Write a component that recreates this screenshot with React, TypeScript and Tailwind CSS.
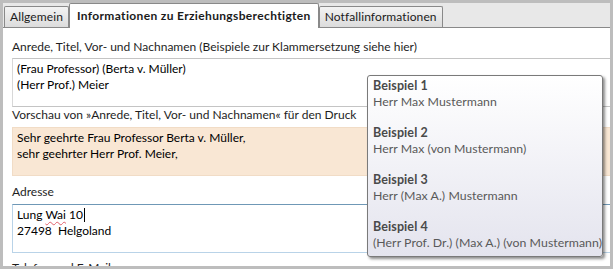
const font = "font-['Lato','Open_Sans',sans-serif]";

const examples = [
  { title: 'Beispiel 1', text: 'Herr Max Mustermann' },
  { title: 'Beispiel 2', text: 'Herr Max (von Mustermann)' },
  { title: 'Beispiel 3', text: 'Herr (Max A.) Mustermann' },
  { title: 'Beispiel 4', text: '(Herr Prof. Dr.) (Max A.) (von Mustermann)' },
];

function Tab({ label, active = false }: { label: string; active?: boolean }) {
  if (active) {
    return (
      <div className="relative z-10 -mb-px flex h-[25px] items-center rounded-t-[2px] border border-b-0 border-[#898989] bg-white px-[7px] font-bold tracking-[0.35px] text-[#1b1b1b]">
        {label}
      </div>
    );
  }
  return (
    <div className="flex h-[21px] items-center rounded-t-[2px] border border-b-0 border-[#898989] bg-gradient-to-b from-[#f3f3f3] to-[#dcdcdc] px-[5px] tracking-[0.1px] text-[#1b1b1b]">
      {label}
    </div>
  );
}

function ExampleTooltip() {
  return (
    <div className="absolute left-[364px] top-[72px] flex h-[182px] w-[236px] flex-col gap-[15px] whitespace-nowrap rounded-[3px] border border-[#7a7a7a] bg-gradient-to-b from-white to-[#e4e4ee] px-[5px] pt-[2px] shadow-[2px_2px_3px_rgba(0,0,0,0.45)]">
      {examples.map((ex) => (
        <div key={ex.title} className="leading-4">
          <div className="text-[12.5px] font-bold tracking-[0.1px] text-[#4a4a4a]">{ex.title}</div>
          <div className="text-[12.3px] tracking-[0.05px] text-[#595959]">{ex.text}</div>
        </div>
      ))}
    </div>
  );
}

export default function App() {
  return (
    <div className={`h-[269px] w-[613px] overflow-hidden bg-[#bdbdbd] p-[3px] text-[12px] leading-4 ${font}`}>
      <div className="relative flex h-full flex-col overflow-hidden bg-white">
        <div className="flex h-[25px] shrink-0 items-end border-b border-[#898989] bg-[#e8e8e8] pl-px">
          <Tab label="Allgemein" />
          <Tab label="Informationen zu Erziehungsberechtigten" active />
          <Tab label="Notfallinformationen" />
        </div>

        <div className="flex flex-col pl-[9px] pt-[11px] text-[#1e1e1e]">
          <label className="mb-[3px]">
            Anrede, Titel, Vor- und Nachnamen (Beispiele zur Klammersetzung siehe hier)
          </label>
          <div className="-mr-4 h-[49px] border border-[#c4c4c4] border-l-[#d8d8d8] px-[4px] pt-[2px] text-black">
            <div>(Frau Professor) (Berta v. Müller)</div>
            <div>(Herr Prof.) Meier</div>
          </div>

          <label className="mb-[4px]">Vorschau von »Anrede, Titel, Vor- und Nachnamen« für den Druck</label>
          <div className="-mr-4 h-[49px] border border-[#f1dcc6] bg-[#f9e7d4] px-[4px] pt-[2px] text-black">
            <div>Sehr geehrte Frau Professor Berta v. Müller,</div>
            <div>sehr geehrter Herr Prof. Meier,</div>
          </div>

          <label className="mb-[4px] mt-[8px]">Adresse</label>
          <div className="-mr-4 h-[49px] border border-[#b9d3e8] border-t-[#6f98b6] px-[4px] pt-[2px] text-black">
            <div>
              Lung{' '}
              <span className="underline decoration-[#e0606a] decoration-wavy decoration-1 underline-offset-2">Wai</span>{' '}
              10
              <span className="ml-px inline-block h-[14px] w-px bg-black align-[-3px]" />
            </div>
            <div className="whitespace-pre">27498  Helgoland</div>
          </div>

          <label className="mt-[7px]">Telefon und E-Mail</label>
        </div>

        <ExampleTooltip />
      </div>
    </div>
  );
}
